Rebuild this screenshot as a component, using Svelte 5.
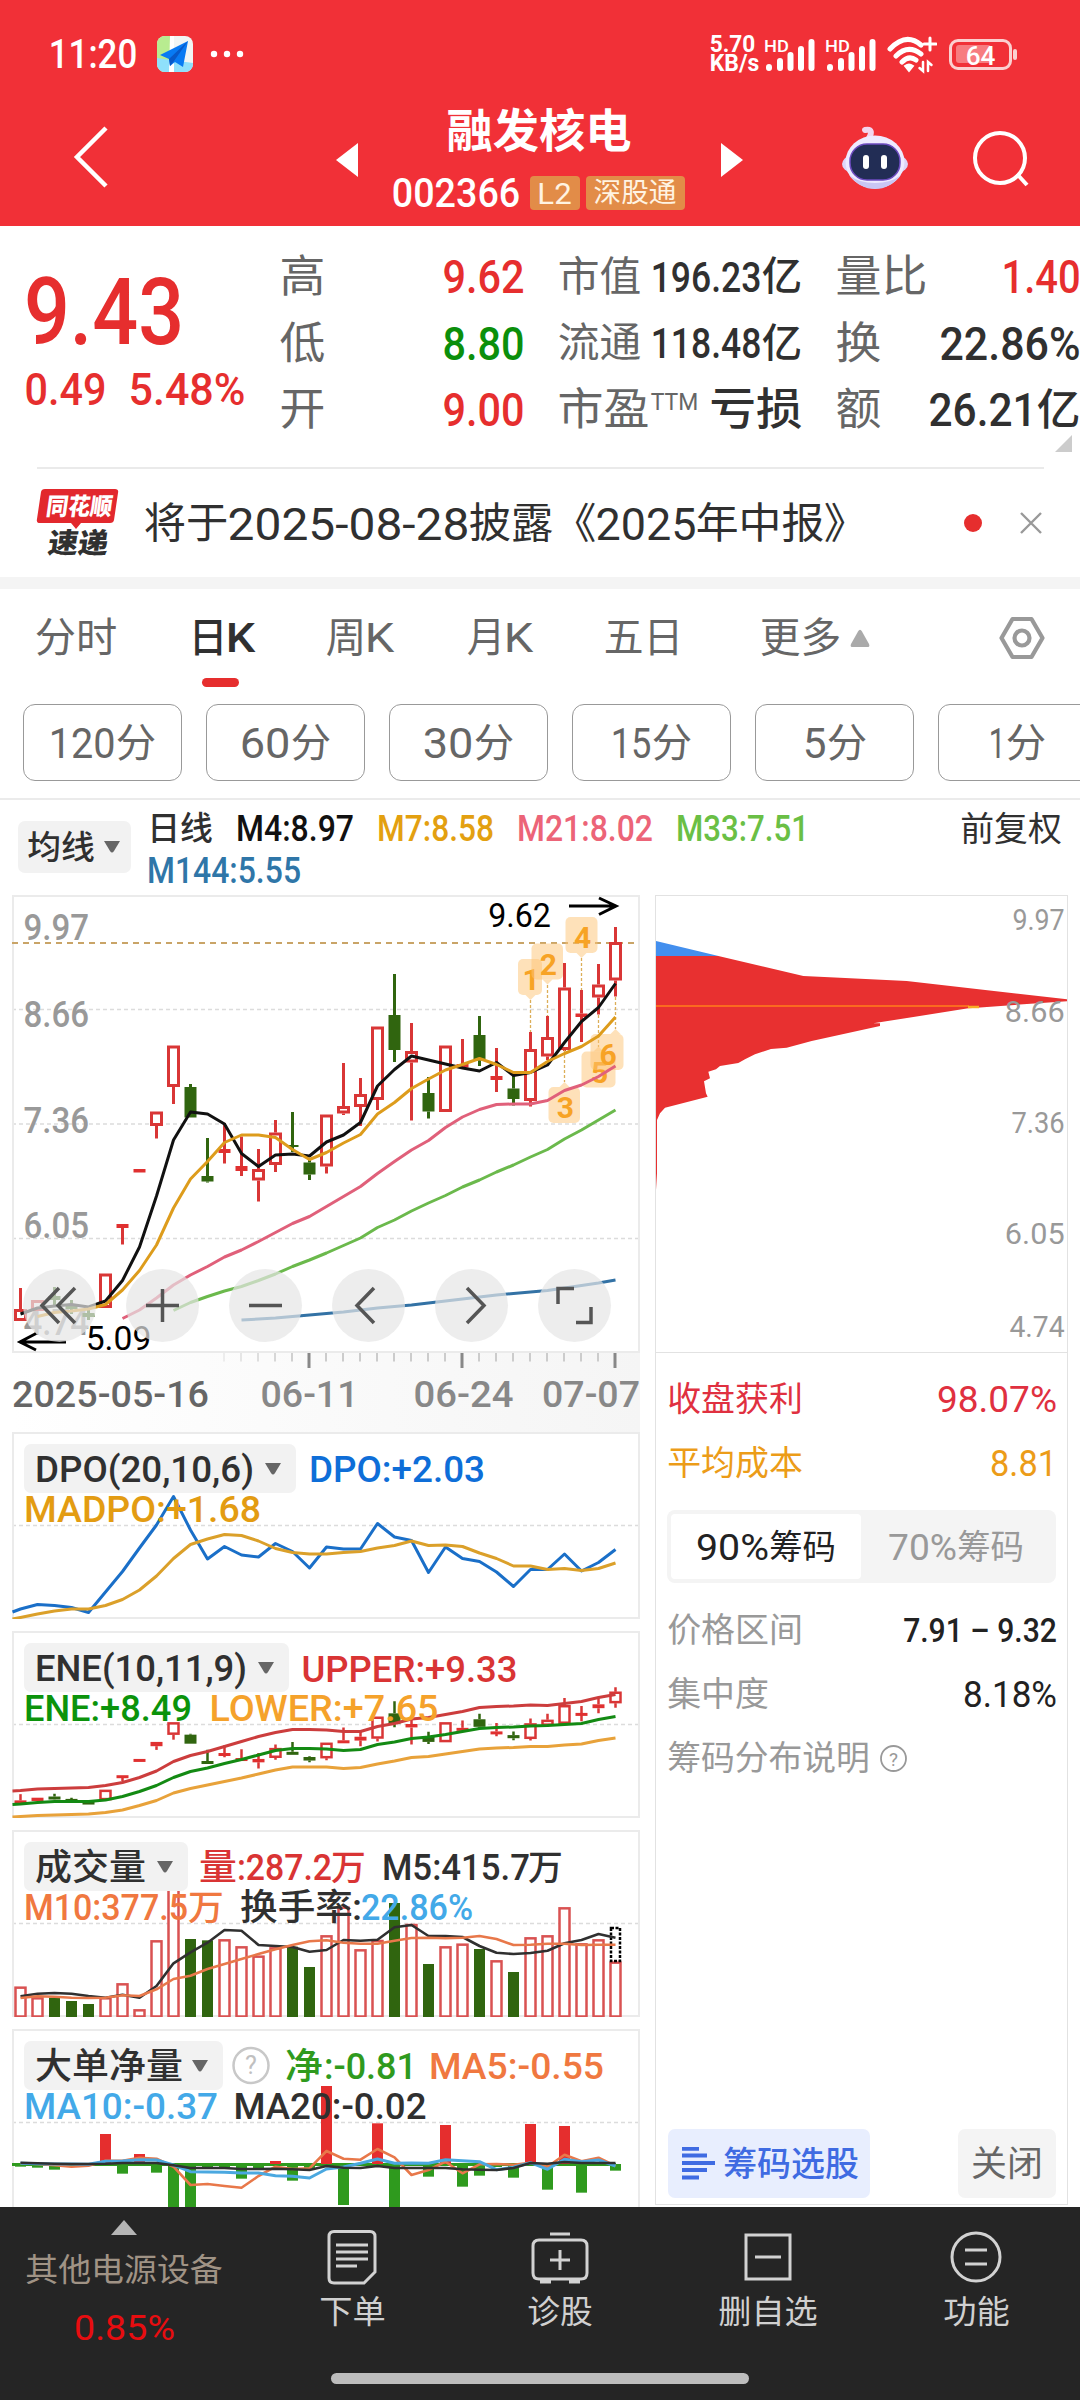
<script lang="ts">
  const step = 17;
  const cx = (i: number) => 20.5 + step * i;

  // [wick top, body top, body bottom, wick bottom, rising]
  const candles: [number, number, number, number, boolean][] = [
    [1288, 1309, 1321, 1321, true], [1300, 1300, 1311, 1311, true], [1287, 1296, 1300, 1305, false],
    [1300, 1304, 1309, 1314, false], [1308, 1313, 1317, 1320, false], [1273.5, 1273.5, 1308, 1308, true],
    [1224, 1224, 1228, 1244.5, true], [1169, 1169, 1172.5, 1172.5, true], [1111.5, 1111.5, 1126, 1138.5, true],
    [1045.5, 1045.5, 1087, 1104, true], [1084, 1087, 1117.5, 1117.5, false], [1138, 1176, 1181.5, 1182.5, false],
    [1123, 1149, 1153, 1163.5, true], [1136.5, 1166, 1171, 1176, true], [1149, 1169, 1180.5, 1201.5, true],
    [1120, 1132.5, 1165, 1172, true], [1112, 1145, 1147, 1152, false], [1160, 1162.5, 1174.5, 1180, false],
    [1114.5, 1114.5, 1166.5, 1173.5, true], [1063, 1106, 1113.5, 1115, true], [1078, 1094, 1107, 1126, true],
    [1026.5, 1026.5, 1100, 1110, true], [974, 1015, 1050, 1062, false], [1023, 1051, 1062.5, 1120.5, true],
    [1077, 1093, 1111.5, 1118.5, false], [1045.5, 1045.5, 1112, 1112, true], [1039, 1064, 1067.5, 1067.5, true],
    [1016, 1035, 1060.5, 1066, false], [1048, 1076, 1080, 1092, true], [1076, 1088.5, 1099, 1105.5, false],
    [1032, 1049, 1101, 1106.5, true], [1016, 1037, 1056.5, 1060, true], [963, 987.5, 1050, 1051, true],
    [990, 1013.5, 1017, 1042, true], [964, 984.5, 997.5, 1014.5, true], [927, 942, 980.5, 996.5, true],
  ];

  const m4 = [1314, 1308, 1306, 1304.5, 1307, 1301, 1280.5, 1247, 1196, 1140, 1112, 1114, 1124, 1153.5, 1166.5, 1155, 1154, 1156, 1142, 1135, 1122.5, 1086, 1069.5, 1056, 1060, 1064, 1068, 1071, 1062.5, 1075.5, 1072.5, 1065, 1042.5, 1021.5, 1007.5, 983.5];
  const m7 = [1316.5, 1312.5, 1311, 1309, 1304.5, 1290, 1270.5, 1245, 1208, 1179, 1161.5, 1142.5, 1135, 1135, 1137.5, 1149.5, 1159.5, 1152.5, 1143, 1134.5, 1114, 1102.5, 1088.5, 1079, 1070, 1064.5, 1058.5, 1064.5, 1072.5, 1072.5, 1061.5, 1053.5, 1046.5, 1036, 1017];
  const m21 = [1318.5, 1310, 1298, 1285, 1275, 1266.5, 1257, 1250, 1241.5, 1232.5, 1223.5, 1216.5, 1206.5, 1196.5, 1186.5, 1173.5, 1161.5, 1150, 1140.5, 1127.5, 1117, 1109.5, 1104.5, 1104, 1104, 1100.5, 1090.5, 1085, 1076.5, 1066];
  const m33 = [1310.5, 1302.5, 1296.5, 1291, 1286.5, 1280.5, 1274, 1266.5, 1260, 1253, 1245.5, 1238, 1227.5, 1220, 1211, 1203, 1195.5, 1187, 1180, 1172, 1165, 1157, 1149.5, 1139, 1130, 1120, 1110];
  const m144 = [1320, 1319, 1318, 1316.5, 1315, 1313.5, 1312, 1310, 1308, 1306.5, 1305, 1303, 1301, 1299, 1297, 1295, 1293.5, 1292, 1290.5, 1288, 1285.5, 1283, 1280];

  const dpo = [1609, 1604.5, 1605.5, 1607.5, 1612.5, 1592, 1571.5, 1548, 1525, 1496.5, 1530, 1559, 1546.5, 1555, 1557, 1543.5, 1551.5, 1568, 1547, 1549, 1549, 1523.5, 1537, 1540.5, 1572.5, 1547, 1558.5, 1561.5, 1572, 1586.5, 1569.5, 1569.5, 1554, 1571, 1562.5, 1549.5];
  const madpo = [1617.5, 1614, 1611, 1609, 1609, 1605.5, 1599.5, 1590, 1576, 1558.5, 1544.5, 1539, 1534.5, 1535.5, 1541, 1548.5, 1552.5, 1554, 1554, 1552.5, 1551.5, 1548, 1545.5, 1541, 1545.5, 1545, 1546.5, 1553, 1558.5, 1566, 1566, 1569.5, 1568.5, 1570.5, 1568.5, 1563];

  const upper = [1790.5, 1789, 1788.5, 1788, 1787.5, 1785.5, 1782.5, 1777.5, 1771, 1761.5, 1755.5, 1751.5, 1746.5, 1741.5, 1736.5, 1732.5, 1729.5, 1729.5, 1730, 1731.5, 1731.5, 1726.5, 1723.5, 1719, 1717.5, 1714.5, 1711.5, 1707.5, 1706.5, 1706, 1705, 1705.5, 1703.5, 1701.5, 1697.5, 1694.5];
  const ene = [1804, 1802.5, 1801.5, 1801.5, 1801.5, 1800, 1796.5, 1791.5, 1785.5, 1777.5, 1771.5, 1768, 1763.5, 1759.5, 1755, 1750.5, 1748.5, 1748.5, 1749, 1750.5, 1749.5, 1744.5, 1742, 1738.5, 1737, 1734.5, 1731.5, 1728.5, 1727.5, 1727, 1726, 1725.5, 1724.5, 1723.5, 1719.5, 1716.5];
  const lower = [1816.5, 1815.5, 1815, 1814.5, 1814, 1812.5, 1810, 1805.5, 1800.5, 1793, 1788.5, 1785, 1781.5, 1778, 1774, 1770, 1767, 1767, 1767, 1768.5, 1767.5, 1764, 1761, 1757.5, 1756.5, 1754, 1751.5, 1749, 1748, 1747.5, 1746.5, 1746.5, 1745, 1744, 1740.5, 1738];
  const eneY = (y: number) => 1687.3 + (y - 927) * 0.296;

  const third = (base: number, list: number[]) => list.map((v) => base + v / 3);
  const falling = [2, 3, 4, 10, 11, 16, 17, 22, 24, 27, 29];
  const volume = third(1820, [500, 532, 533, 543, 552, 532, 490, 568, 361, 198, 357, 361, 358, 379, 407, 382, 380, 441, 346, 260, 388, 360, 249, 312, 432, 379, 371, 387, 421, 456, 352, 346, 262, 370, 358, 425]);
  const vol5 = third(1820, [529, 521, 519, 521, 528, 533, 524, 533, 498, 430, 397, 368, 330, 332, 375, 378, 381, 395, 390, 360, 362, 359, 322, 315, 348, 348, 351, 378, 398, 402, 399, 392, 370, 360, 342, 353]);
  const vol10 = third(1820, [534, 529, 530, 533, 534, 533, 526, 528, 508, 477, 467, 447, 432, 417, 402, 388, 375, 364, 361, 368, 371, 371, 362, 354, 353, 355, 353, 348, 357, 375, 374, 371, 371, 375, 374, 374]);

  const net = third(2020, [440, 443, 449, 434, 434, 342, 461, 402, 458, 570, 570, 445, 443, 476, 445, 423, 482, 446, 198, 555, 436, 310, 570, 437, 470, 315, 500, 467, 441, 473, 312, 509, 318, 518, 434, 452]);
  const net5 = third(2020, [430, 432, 436, 440, 437, 422, 422, 413, 416, 440, 495, 492, 498, 503, 468, 440, 447, 445, 393, 416, 419, 387, 412, 465, 450, 425, 460, 433, 432, 434, 428, 440, 404, 424, 413, 438]);
  const net10 = third(2020, [430, 431, 432, 432, 433, 424, 423, 419, 420, 435, 455, 456, 457, 459, 459, 467, 469, 474, 447, 441, 430, 417, 430, 429, 430, 419, 422, 425, 449, 442, 428, 448, 418, 425, 420, 438]);
  const net20 = third(2020, [428, 430, 431, 432, 432, 431, 429, 429, 429, 436, 444, 444, 444, 447, 447, 446, 448, 450, 438, 443, 444, 438, 444, 444, 444, 444, 448, 449, 450, 444, 429, 431, 426, 429, 429, 429]);

  const path = (list: number[], from = 0, edge = 0) =>
    (edge ? `12.5,${edge} ` : '') + list.map((y, i) => `${cx(i + from)},${y.toFixed(1)}`).join(' ');

  const flags = [
    { n: '1', x: 518, w: 24, y: 959, px: 530.5, up: false, a: 1000, b: 1032 },
    { n: '2', x: 531.5, w: 31.5, y: 943.5, px: 547.5, up: false, a: 985, b: 1016 },
    { n: '4', x: 565.5, w: 32, y: 917, px: 581.5, up: false, a: 958, b: 990 },
    { n: '3', x: 548.5, w: 31.5, y: 1087, px: 564.5, up: true, a: 1050, b: 1082 },
    { n: '5', x: 581.5, w: 34, y: 1051.5, px: 598.5, up: true, a: 1015, b: 1047 },
    { n: '6', x: 590.5, w: 33, y: 1034, px: 615.5, up: true, a: 997, b: 1029 },
  ];

  const tabs = [
    { t: [['分时', 78]], l: 0 }, { t: [['日', 34], ['K', 25]], l: 76, on: true }, { t: [['周', 36], ['K', 25]], l: 75 },
    { t: [['月', 34], ['K', 25]], l: 77 }, { t: [['五日', 75]], l: 75 }, { t: [['更多', 77]], l: 81, more: true },
  ] as { t: [string, number][]; l: number; on?: boolean; more?: boolean }[];
  const minutes: [string, number][] = [['120', 62], ['60', 46], ['30', 46], ['15', 36], ['5', 19], ['1', 12]];
  const averages: [string, number, string][] = [
    ['M4:8.97', 114, 'black'], ['M7:8.58', 113, 'amber'], ['M21:8.02', 132, 'pink'], ['M33:7.51', 129, 'lime'],
  ];
</script>

{#snippet fit(t: string, w: number, s: number, c = '')}
  <svg class="fit {c}" width={w} height={s}><text x={-s * 0.055} y={s * 0.86} font-size={s} textLength={w + s * 0.11} lengthAdjust="spacingAndGlyphs">{t}</text></svg>
{/snippet}

{#snippet label(t: string, x: number, y: number, w: number, s: number, c: string)}
  <text class={c} x={x - s * 0.055} {y} font-size={s} textLength={w + s * 0.11} lengthAdjust="spacingAndGlyphs">{t}</text>
{/snippet}

{#snippet line(points: string, c: string)}
  <polyline class="curve {c}" {points} />
{/snippet}

{#snippet frame(y: number, h: number, grid: number[])}
  {#each grid as g}<line class="grid" x1="12" x2="639" y1={g} y2={g} />{/each}
  <rect class="frame" x="13" {y} width="626" height={h} />
{/snippet}

{#snippet caret(w = 16, h = 12)}
  <svg width={w} height={h} viewBox="0 0 16 12"><path class="f666" d="M0 0H16L10 10Q8 13 6 10Z" /></svg>
{/snippet}

{#snippet signal()}
  <div class="signal">
    {@render fit('HD', 23, 17, 'w500')}
    <svg class="bars" width="49" height="32" viewBox="0 0 49 32">
      <path d="M3 29v-1M14 29v-7M24.500 29v-13M35 29v-19M45.500 29V3" stroke="#fff" stroke-width="6" stroke-linecap="round" />
    </svg>
  </div>
{/snippet}

<main>
  <header>
    <div class="status">
      <div class="clock">
        {@render fit('11:20', 84, 40, 'w500')}
        <svg class="app" width="36" height="36" viewBox="0 0 36 36">
          <rect width="36" height="36" rx="8" fill="#f1f5f4" />
          <path d="M8 0h5v36H8a8 8 0 0 1-8-8V8a8 8 0 0 1 8-8Z" fill="#b8ec90" />
          <path d="M0 22 36 27v1a8 8 0 0 1-8 8H8a8 8 0 0 1-8-8Z" fill="#8fe0fb" />
          <path d="M13 0h4v36h-5Z" fill="#fff" />
          <path d="M31 5 3 19l9 4 1 7 5-4 8 5Z" fill="#087af3" /><path d="M31 5 12 23l1 7 4-5Z" fill="#0758c8" />
        </svg>
        <svg width="34" height="8"><g fill="#fff"><circle cx="4" cy="4" r="3.200" /><circle cx="17" cy="4" r="3.200" /><circle cx="30" cy="4" r="3.200" /></g></svg>
      </div>
      <div class="system">
        <div class="speed">{@render fit('5.70', 43, 23, 'w700')}{@render fit('KB/s', 47, 23, 'w700')}</div>
        {@render signal()}
        {@render signal()}
        <svg class="wifi" width="50" height="38" viewBox="0 0 50 38" fill="none" stroke="#fff" stroke-linecap="round">
          <path d="M3 13Q19-4 34 9M9 20Q21 8 34 18M15 26Q22 19 29 24" stroke-width="5" />
          <path d="M18 30q4-3 8 0l-4 5Z" fill="#fff" stroke-width="2" />
          <path d="M43 2V14M37 8H49" stroke-width="3" /><path d="M36 26V35L32.500 32M41 35V26L44.500 29" stroke-width="2.500" />
        </svg>
        <div class="battery"><div class="level"></div><span>{@render fit('64', 27, 25, 'w500')}</span></div>
        <i class="nub"></i>
      </div>
    </div>
    <div class="titlebar">
      <svg width="36" height="62" viewBox="0 0 36 62"><path d="M33 2 4 31 33 60" fill="none" stroke="#fff" stroke-width="4.500" /></svg>
      <svg class="prev" width="22" height="34"><path d="M22 0V34L0 17Z" fill="#fff" /></svg>
      <div class="name">
        {@render fit('融发核电', 180, 46, 'w700')}
        <div class="code">
          {@render fit('002366', 124, 40, 'w500')}
          <b>{@render fit('L2', 31, 30, 'cream')}</b>
          <b class="wide">{@render fit('深股通', 80, 27, 'cream')}</b>
        </div>
      </div>
      <svg class="next" width="22" height="34"><path d="M0 0V34L22 17Z" fill="#fff" /></svg>
      <svg class="robot" width="68" height="64" viewBox="0 0 68 64">
        <path d="M27 14Q34 2 24 4" fill="none" stroke="#f3d5ee" stroke-width="6" stroke-linecap="round" />
        <ellipse cx="34" cy="38" rx="33" ry="14" fill="#ddd5f8" /><ellipse cx="34" cy="36" rx="29.500" ry="26.500" fill="#eeeaff" />
        <path d="M8 49q11 14 26 14t26-14q-10 8-26 8T8 49Z" fill="#c9c6f4" />
        <rect x="9" y="18" width="50" height="36" rx="17" fill="#222d55" stroke="#6d4bc0" stroke-width="1.500" />
        <rect x="22" y="29" width="6" height="14" rx="3" fill="#fff" /><rect x="40" y="29" width="6" height="14" rx="3" fill="#fff" />
      </svg>
      <svg class="search" width="58" height="58" viewBox="0 0 58 58" fill="none" stroke="#fff" stroke-width="4"><circle cx="28" cy="28" r="25" /><path d="M45 44 55 55" /></svg>
    </div>
  </header>

  <section class="quote">
    <div class="last">
      {@render fit('9.43', 150, 92, 'red w500')}
      <div>{@render fit('0.49', 77, 45, 'red w500')}{@render fit('5.48%', 112, 45, 'red w500')}</div>
    </div>
    <div class="cols">
      <p>{@render fit('高', 41, 44, 'grey')}<span>{@render fit('9.62', 77, 46, 'red w500')}</span></p>
      <p>{@render fit('低', 41, 44, 'grey')}<span>{@render fit('8.80', 77, 46, 'green w500')}</span></p>
      <p>{@render fit('开', 41, 44, 'grey')}<span>{@render fit('9.00', 77, 46, 'red w500')}</span></p>
    </div>
    <div class="cols">
      <p>{@render fit('市值', 79, 41, 'grey')}<span>{@render fit('196.23', 106, 43, 'dark w500')}{@render fit('亿', 36, 40, 'dark w500')}</span></p>
      <p>{@render fit('流通', 79, 41, 'grey')}<span>{@render fit('118.48', 106, 43, 'dark w500')}{@render fit('亿', 36, 40, 'dark w500')}</span></p>
      <p><span class="ttm">{@render fit('市盈', 87, 44, 'grey')}<sup>{@render fit('TTM', 45, 24, 'grey')}</sup></span>{@render fit('亏损', 88, 44, 'dark w500')}</p>
    </div>
    <div class="cols">
      <p>{@render fit('量比', 87, 44, 'grey')}<span>{@render fit('1.40', 74, 46, 'red w500')}</span></p>
      <p>{@render fit('换', 41, 44, 'grey')}<span>{@render fit('22.86%', 136, 46, 'dark w500')}</span></p>
      <p>{@render fit('额', 41, 44, 'grey')}<span>{@render fit('26.21', 103, 46, 'dark w500')}{@render fit('亿', 39, 43, 'dark w500')}</span></p>
    </div>
    <svg class="corner" width="17" height="17"><path d="M17 0V17H0Z" fill="#ccc" /></svg>
  </section>

  <section class="news">
    <div class="brand">
      <svg width="82" height="68" viewBox="0 0 82 68">
        <path d="M8 0H78q4 0 3 4L77 31q-.500 3-4 3H44l-5 6-5-6H3q-4 0-3-4L4 3q.500-3 4-3Z" fill="#e2282d" />
        <g transform="translate(2 0) skewX(-8)">
          <text class="brandtext fwhite" x="10" y="26" font-size="24" textLength="66" lengthAdjust="spacingAndGlyphs">同花顺</text>
          <text class="brandtext fdark" x="17" y="64" font-size="28" textLength="60" lengthAdjust="spacingAndGlyphs">速递</text>
        </g>
      </svg>
    </div>
    {@render fit('将于', 80, 42, 'dark')}{@render fit('2025-08-28', 237, 45, 'dark')}{@render fit('披露', 80, 42, 'dark')}{@render fit('《', 39, 42, 'dark')}{@render fit('2025', 96, 45, 'dark')}{@render fit('年中报', 124, 42, 'dark')}{@render fit('》', 39, 42, 'dark')}
    <i class="dot"></i>
    <svg class="close" width="24" height="24"><path d="M2 2 22 22M22 2 2 22" stroke="#999" stroke-width="2.400" /></svg>
  </section>

  <nav class="tabs">
    {#each tabs as tab}
      <div class="tab" class:on={tab.on} style:margin-left="{tab.l}px">
        {#each tab.t as [t, w]}{@render fit(t, w, 41, tab.on ? 'dark w500' : 'grey')}{/each}
        {#if tab.more}<svg width="20" height="18"><path d="M8 2.500Q10-1 12 2.500L19 15Q20 18 18 18H2Q0 18 1 15Z" fill="#aaa" /></svg>{/if}
      </div>
    {/each}
    <svg class="gear" width="46" height="44" viewBox="0 0 46 44" fill="none" stroke="#999" stroke-width="4.200" stroke-linejoin="round"><path d="M13.500 3H32.500L43.500 22 32.500 41H13.500L2.500 22Z" /><circle cx="23" cy="22" r="7.500" /></svg>
  </nav>
  <nav class="minutes">
    {#each minutes as [n, w]}<div>{@render fit(n, w, 43, 'grey')}{@render fit('分', 36, 40, 'grey')}</div>{/each}
  </nav>

  <section class="averages">
    <button class="drop">{@render fit('均线', 64, 33, 'dark w500')}{@render caret(16, 12)}</button>
    <div class="avg">
      {@render fit('日线', 62, 33, 'dark w500')}
      {#each averages as [t, w, c]}{@render fit(t, w, 36, c + ' w500')}{/each}
      {@render fit('M144:5.55', 150, 37, 'blue w500')}
    </div>
    <div class="adjust">{@render fit('前复权', 98, 34, 'dark')}</div>
  </section>

  <section class="body">
    <div class="left">
      <div class="panel">
        <svg width="640" height="458" viewBox="0 895 640 458">
          {@render frame(896, 456, [1009.5, 1124, 1238.5])}
          <line x1="12" x2="639" y1="943" y2="943" stroke="#c9a467" stroke-width="2" stroke-dasharray="6 5" />
          {#each [['9.97', 940], ['8.66', 1027], ['7.36', 1133], ['6.05', 1238], ['4.74', 1335]] as [t, y]}
            {@render label(String(t), 25.5, Number(y), 61.5, 37, 'f999 w500')}
          {/each}
          {#each candles as [wt, bt, bb, wb, up], i}
            <g class={up ? 'up' : 'down'}>
              <path d="M{cx(i)} {wt}V{bt}M{cx(i)} {bb}V{wb}" />
              {#if up && bb - bt > 6}<rect class="hollow" x={cx(i) - 5} y={bt + 1.5} width="10" height={bb - bt - 3} />
              {:else}<rect class="solid" x={cx(i) - 6} y={bt} width="12" height={bb - bt} />{/if}
            </g>
          {/each}
          {#each flags as f}
            <path d="M{f.px} {f.a}V{f.b}" stroke="#dcae58" stroke-width="1.300" stroke-dasharray="3 2" />
            <rect x={f.x} y={f.y} width={f.w} height="36" rx="5" fill="#fdc373" opacity=".5" />
            <path d={f.up ? `M${f.px - 5} ${f.y}l5-5 5 5Z` : `M${f.px - 5} ${f.y + 36}l5 5 5-5Z`} fill="#fdc373" opacity=".5" />
            <text class="flag" x={f.x + f.w / 2 + 1} y={f.y + 31}>{f.n}</text>
          {/each}
          {@render line(path(m144, 13), 'sblue')}
          {@render line(path(m33, 9), 'slime')}
          {@render line(path(m21, 6), 'spink')}
          {@render line(path(m4), 'sblack')}
          {@render line(path(m7, 1), 'samber')}
          <g fill="none" stroke="#000" stroke-width="3"><path d="M569 906H616M599 898 616 906 599 914.500M66 1342H20M36 1333.500 20 1342 36 1350" /></g>
          {@render label('9.62', 490, 927, 59, 33, 'f000')}
          {@render label('5.09', 87.5, 1350, 62, 33, 'f000')}
        </svg>
        <div class="tools">
          <i><svg viewBox="0 0 73 73"><path d="M36 19 19 36.500 36 54M52 19 35 36.500 52 54" /></svg></i>
          <i><svg viewBox="0 0 73 73"><path d="M36.500 20V53M20 36.500H53" /></svg></i>
          <i><svg viewBox="0 0 73 73"><path d="M20 36.500H53" /></svg></i>
          <i><svg viewBox="0 0 73 73"><path d="M42 19 25 36.500 42 54" /></svg></i>
          <i><svg viewBox="0 0 73 73"><path d="M32 19 49 36.500 32 54" /></svg></i>
          <i><svg viewBox="0 0 73 73"><path d="M20 35V19.500H36M53 38V53.500H38" /></svg></i>
        </div>
      </div>
      <svg class="axis" width="640" height="79" viewBox="0 1353 640 79">
        <defs>
          <linearGradient id="fade"><stop offset="0" stop-color="#f5f5f5" stop-opacity="0" /><stop offset="1" stop-color="#f5f5f5" /></linearGradient>
        </defs>
        <rect x="12" y="1353" width="628" height="79" fill="url(#fade)" />
        {#each Array(24) as _, k}
          {@const i = k + 12}
          {@const major = i % 9 === 8}
          <line x1={cx(i) - 0.5} x2={cx(i) - 0.5} y1="1353" y2={major ? 1368 : 1361.5} stroke={major ? '#888' : '#ccc'} stroke-width={major ? 3 : 2} opacity={Math.min(1, 0.3 + k * 0.15)} />
        {/each}
        {@render label('2025-05-16', 14, 1407, 193, 36, 'f666 w500')}
        {@render label('06-11', 262.5, 1407, 94, 36, 'f888 w500')}
        {@render label('06-24', 415.5, 1407, 96, 36, 'f888 w500')}
        {@render label('07-07', 544, 1407, 94, 36, 'f888 w500')}
      </svg>

      <div class="panel gap">
        <svg width="640" height="187" viewBox="0 1432 640 187">
          {@render frame(1433, 185, [1525.5])}
          {@render line(path(dpo, 0, 1612), 'sdpo')}
          {@render line(path(madpo, 0, 1619), 'smadpo')}
          {@render label('DPO:+2.03', 311, 1482, 172, 37, 'fdpo w500')}
          {@render label('MADPO:+1.68', 26, 1521.5, 233, 37, 'fmadpo w500')}
        </svg>
        <button class="drop pick">{@render fit('DPO(20,10,6)', 215, 37, 'dark w500')}{@render caret()}</button>
      </div>

      <div class="panel gap">
        <svg width="640" height="187" viewBox="0 1631 640 187">
          {@render frame(1632, 185, [1724.5])}
          {#each candles as [wt, bt, bb, wb, up], i}
            {@const h = Math.max(3, eneY(bb) - eneY(bt))}
            <g class="{up ? 'up' : 'down'} thin">
              <path d="M{cx(i)} {eneY(wt)}V{eneY(bt)}M{cx(i)} {eneY(bb)}V{eneY(wb)}" />
              {#if up && h > 4.5}<rect class="hollow" x={cx(i) - 5} y={eneY(bt) + 1} width="10" height={h - 2} />
              {:else}<rect class="solid" x={cx(i) - 6} y={eneY(bt)} width="12" height={h} />{/if}
            </g>
          {/each}
          {@render line(path(upper, 0, 1791), 'supper')}
          {@render line(path(ene, 0, 1804.5), 'sene')}
          {@render line(path(lower, 0, 1817), 'slower')}
          {@render label('UPPER:+9.33', 303.5, 1681.5, 212, 37, 'fup w500')}
          {@render label('ENE:+8.49', 26, 1720.5, 164, 37, 'fene w500')}
          {@render label('LOWER:+7.65', 211.5, 1720.5, 225, 37, 'flower w500')}
        </svg>
        <button class="drop pick">{@render fit('ENE(10,11,9)', 208, 37, 'dark w500')}{@render caret()}</button>
      </div>

      <div class="panel gap">
        <svg width="640" height="187" viewBox="0 1830 640 187">
          {@render frame(1831, 185, [1923.5])}
          {#each volume as y, i}
            {#if falling.includes(i)}<rect fill="#30650f" x={cx(i) - 5.5} {y} width="11" height={2017 - y} />
            {:else}<rect class="volbar" x={cx(i) - 5} y={y + 1} width="10" height={2015.5 - y} />{/if}
          {/each}
          <rect x="611" y="1928" width="9" height="33" fill="#fff" stroke="#000" stroke-width="2.500" stroke-dasharray="3 1.500" />
          {@render label('量', 201, 1880, 34, 36, 'fup w500')}{@render label(':287.2', 239, 1880, 91, 37, 'fup w500')}{@render label('万', 333, 1880, 31, 35, 'fup w500')}
          {@render label('M5:415.7', 384, 1880, 144, 37, 'fdark w500')}{@render label('万', 530, 1880, 31, 35, 'fdark w500')}
          {@render label('M10:377.5', 26, 1919.5, 160, 37, 'forange w500')}{@render label('万', 190, 1919.5, 32, 35, 'forange w500')}
          {@render label('换手率', 242, 1919.5, 109, 36, 'fdark w500')}{@render label(':', 354, 1919.5, 6, 37, 'fdark w500')}
          {@render label('22.86%', 363, 1919.5, 108, 37, 'fsky w500')}
          {@render line(path(vol5), 'sdark')}
          {@render line(path(vol10), 'sorange')}
        </svg>
        <button class="drop pick">{@render fit('成交量', 107, 36, 'dark w500')}{@render caret()}</button>
      </div>

      <div class="panel gap">
        <svg width="640" height="178" viewBox="0 2029 640 178">
          {@render frame(2030, 200, [2122.5])}
          <line x1="12" x2="616" y1="2164.500" y2="2164.500" stroke="#2f9a1e" stroke-width="3" />
          {#each net as y, i}
            <rect fill={y < 2164 ? '#e52e2e' : '#2f9a1e'} x={cx(i) - 5.5} y={Math.min(y, 2164)} width="11" height={Math.abs(y - 2164)} />
          {/each}
          {@render line(path(net5), 'sorange')}
          {@render line(path(net10), 'ssky')}
          {@render line(path(net20), 'sdark')}
          <circle cx="251" cy="2065.500" r="17.500" fill="#fff" stroke="#c8c8c8" stroke-width="2.500" />
          <text class="ask" x="251" y="2074">?</text>
          {@render label('净', 287, 2079, 34, 36, 'fnet w500')}{@render label(':-0.81', 326, 2079, 89, 37, 'fnet w500')}
          {@render label('MA5:-0.55', 431, 2079, 171, 37, 'forange w500')}
          {@render label('MA10:-0.37', 26, 2118.5, 190, 37, 'fsky w500')}
          {@render label('MA20:-0.02', 235.5, 2118.5, 189, 37, 'fdark w500')}
        </svg>
        <button class="drop pick">{@render fit('大单净量', 144, 36, 'dark w500')}{@render caret()}</button>
      </div>
    </div>

    <aside>
      <svg class="chips" width="412" height="457" viewBox="655 895 412 457">
        <path fill="#e83030" transform="translate(640 880) scale(.33333)" d="M48 228H235L490 288 600 293 800 303 1281 358V364L1150 373 1010 383 985 385 700 430H720V438L515 483 440 503 393 507 345 523 315 538 295 549 240 558 228 568 205 575 210 595 192 604 198 640 203 650 75 683 60 700 51 720V880L48 930Z" />
        <path d="M656 941 718.500 956H656Z" fill="#438fee" />
        <path d="M656 1006H969" stroke="#fb6a1f" stroke-width="2" /><path d="M968 1007H979" stroke="#f8ad25" stroke-width="2.500" />
        {@render label('9.97', 1014, 930, 49, 29.5, 'f999')}
        {@render label('8.66', 1006.5, 1022, 56.5, 29.5, 'f999')}
        {@render label('7.36', 1013, 1133, 50, 29.5, 'f999')}
        {@render label('6.05', 1006.5, 1244, 56.5, 29.5, 'f999')}
        {@render label('4.74', 1011, 1337, 52, 29.5, 'f999')}
      </svg>
      <div class="info">
        <p>{@render fit('收盘获利', 132, 34, 'crimson')}{@render fit('98.07%', 116, 36, 'crimson')}</p>
        <p>{@render fit('平均成本', 132, 34, 'gold')}{@render fit('8.81', 63, 36, 'gold')}</p>
        <div class="toggle">
          <span class="sel">{@render fit('90%', 69, 36, 'ink')}{@render fit('筹码', 63, 34, 'ink')}</span>
          <span>{@render fit('70%', 65, 36, 'soft')}{@render fit('筹码', 63, 34, 'soft')}</span>
        </div>
        <p>{@render fit('价格区间', 132, 34, 'soft')}{@render fit('7.91 – 9.32', 150, 34, 'ink w500')}</p>
        <p>{@render fit('集中度', 98, 34, 'soft')}{@render fit('8.18%', 90, 36, 'ink')}</p>
        <p class="explain">{@render fit('筹码分布说明', 199, 34, 'soft')}<svg width="27" height="27"><circle cx="13.500" cy="13.500" r="12.500" fill="none" stroke="#999" stroke-width="1.800" /><text class="askmark" x="13.500" y="20.500">?</text></svg></p>
      </div>
      <div class="actions">
        <button class="pickstock">
          <svg width="33" height="33"><path d="M0 1.800H17M0 8.600H25M0 16H33M0 23H25M0 30.500H17" stroke="#3f6be2" stroke-width="4" /></svg>
          {@render fit('筹码选股', 132, 34, 'royal w500')}
        </button>
        <button class="shut">{@render fit('关闭', 68, 35, 'grey')}</button>
      </div>
    </aside>
  </section>

  <footer>
    <div class="items">
      <div class="sector">
        <svg width="26" height="15"><path d="M13 0 26 15H0Z" fill="#b5b5b5" /></svg>
        {@render fit('其他电源设备', 194, 32, 'taupe')}
        {@render fit('0.85%', 97, 35, 'deepred')}
      </div>
      <div class="item">
        <svg width="50" height="56" viewBox="0 0 50 56"><path d="M7 2.500H43Q48 2.500 48 7.500V43L37 54H7Q2 54 2 49V7.500Q2 2.500 7 2.500ZM9 16H41M9 23H41M9 30H41M9 37H30" /></svg>
        {@render fit('下单', 63, 32, 'silver')}
      </div>
      <div class="item">
        <svg width="58" height="56" viewBox="0 0 58 56"><path d="M19 5H39M8 11H50Q56 11 56 17V44Q56 50 50 50H8Q2 50 2 44V17Q2 11 8 11ZM9 53H20M38 53H49M29 21V41M19 31H39" /></svg>
        {@render fit('诊股', 62, 32, 'silver')}
      </div>
      <div class="item">
        <svg width="50" height="56" viewBox="0 0 50 56"><path d="M3 6H47V50H3ZM12 28H38" /></svg>
        {@render fit('删自选', 96, 32, 'silver')}
      </div>
      <div class="item">
        <svg width="54" height="56" viewBox="0 0 54 56"><circle cx="27" cy="28" r="24" /><path d="M16 21H38M16 35H38" /></svg>
        {@render fit('功能', 63, 32, 'silver')}
      </div>
    </div>
    <div class="home"></div>
  </footer>
</main>

<style>
  :global(body) { margin: 0; background: #fff; }
  main { width: 1080px; height: 2400px; overflow: hidden; display: flex; flex-direction: column; background: #fff; font-family: Roboto, 'Noto Sans CJK SC', sans-serif; }
  svg { display: block; flex: none; }
  text { font-family: Roboto, 'Noto Sans CJK SC', sans-serif; }
  p { margin: 0; }
  button { border: 0; padding: 0; font: inherit; }
  .fit { overflow: visible; fill: #fff; }
  .w500 { font-weight: 500; }
  .w700 { font-weight: 700; }
  .cream { fill: #fff3e2; }
  .red { fill: #e62e2e; }
  .green { fill: #0b8f0b; }
  .dark { fill: #303030; }
  .grey { fill: #666; }
  .black { fill: #111; }
  .amber { fill: #e3a010; }
  .pink { fill: #ec6478; }
  .lime { fill: #6abf45; }
  .blue { fill: #2f76a8; }
  .crimson { fill: #e03040; }
  .gold { fill: #ec9c18; }
  .ink { fill: #222; }
  .soft { fill: #999; }
  .royal { fill: #3f6be2; }
  .silver { fill: #d0d0d0; }
  .taupe { fill: #a09385; }
  .deepred { fill: #e80d10; }
  .f000 { fill: #000; }
  .f666 { fill: #666; }
  .f888 { fill: #888; }
  .f999 { fill: #999; }
  .fwhite { fill: #fff; }
  .fdark { fill: #303030; }
  .fdpo { fill: #0e6ed8; }
  .fmadpo { fill: #e39c12; }
  .fup { fill: #d93434; }
  .fene { fill: #0b930b; }
  .flower { fill: #f5a22b; }
  .forange { fill: #f07840; }
  .fsky { fill: #43a9e8; }
  .fnet { fill: #2f9a1e; }

  header { height: 226px; background: #f13037; }
  .status { height: 72px; box-sizing: border-box; padding: 35px 64px 0 51px; display: flex; justify-content: space-between; }
  .clock { display: flex; align-items: center; height: 38px; }
  .app { margin: 0 17px 0 22px; }
  .system { display: flex; align-items: center; height: 38px; }
  .speed { display: grid; align-content: center; width: 47px; height: 38px; line-height: 0; margin-right: 7px; margin-top: -2px; }
  .speed .fit + .fit { margin-top: -4px; }
  .signal { position: relative; width: 49px; height: 38px; margin-right: 12px; padding-top: 2px; box-sizing: border-box; }
  .bars { position: absolute; left: 1px; top: 4px; }
  .wifi { margin: 1px 12px 0 0; }
  .battery { position: relative; box-sizing: border-box; width: 63px; height: 31px; border: 3px solid #fbd0d0; border-radius: 9px; }
  .level { box-sizing: border-box; width: 35px; height: 18px; margin: 3.500px 4px; border-radius: 3px; background: #f77c80; }
  .battery span { position: absolute; left: 15px; top: 1px; }
  .nub { width: 4px; height: 11px; margin-left: 1px; margin-right: -1px; border-radius: 2px; background: #fbd0d0; }

  .titlebar { display: flex; align-items: flex-start; height: 154px; padding-left: 73px; }
  .titlebar > svg:first-child { margin-top: 54px; }
  .prev { margin: 71px 36px 0 227px; }
  .name { display: flex; flex-direction: column; align-items: center; padding-top: 35px; width: 290px; }
  .code { display: flex; align-items: center; margin-top: 20px; height: 39px; }
  .code b { display: flex; align-items: center; justify-content: center; width: 50px; height: 34px; margin: 0 0 0 12px; border-radius: 4px; background: #e28c48; font-weight: 400; }
  .code b.wide { width: 99px; margin-left: 6px; }
  .next { margin: 71px 0 0 37px; }
  .robot { margin: 54px 0 0 98px; }
  .search { margin: 58px 0 0 63px; }

  .quote { position: relative; display: flex; height: 241px; box-sizing: border-box; padding: 17px 2px 0 27px; }
  .last { width: 255px; padding-top: 22px; padding-left: 2px; box-sizing: border-box; }
  .last > div { display: flex; gap: 27px; margin-top: 9px; margin-left: -2px; }
  .cols { width: 240px; margin-right: 38px; }
  .cols:nth-of-type(4) { margin-right: 0; width: 240px; }
  .cols p { display: flex; align-items: center; justify-content: space-between; height: 66.500px; }
  .cols p span { display: flex; align-items: center; gap: 5px; }
  .cols sup { display: flex; align-self: flex-start; margin-top: 2px; }
  .corner { position: absolute; right: 8px; bottom: 15px; }

  .news { position: relative; display: flex; align-items: center; height: 110px; margin: 0 36px 0 37px; border-top: 2px solid #eaeaea; box-sizing: border-box; }
  .brand { width: 109px; }
  .brand svg { overflow: visible; }
  .brandtext { font-weight: 900; }
  .news .fit { margin-right: 4px; }
  .dot { width: 18px; height: 18px; border-radius: 9px; background: #e62e2e; margin-left: auto; }
  .close { margin: 0 1px 0 37px; }

  .tabs { display: flex; align-items: center; height: 97px; padding: 0 35px 0 37px; border-top: 12px solid #f4f4f4; }
  .tab { position: relative; display: flex; align-items: center; gap: 3px; }
  .tab > svg:last-child:not(.fit) { margin-left: 8px; }
  .tab.on::after { content: ''; position: absolute; left: 11px; top: 61px; width: 37px; height: 9px; border-radius: 4.500px; background: #e62e2e; }
  .gear { margin-left: auto; }
  .minutes { display: flex; gap: 24px; padding: 18px 0 17px 23px; height: 77px; overflow: hidden; border-bottom: 2px solid #ebebeb; }
  .minutes div { flex: none; box-sizing: border-box; width: 159px; height: 77px; border: 1.500px solid #999; border-radius: 12px; display: flex; align-items: center; justify-content: center; gap: 5px; }

  .averages { display: flex; height: 95px; padding: 0 20px 0 18px; }
  .drop { display: flex; align-items: center; justify-content: space-between; background: #f2f2f2; border-radius: 7px; }
  .averages .drop { width: 113px; height: 52px; margin-top: 21px; padding: 0 11px; box-sizing: border-box; }
  .avg { display: flex; flex-wrap: wrap; align-items: center; align-content: flex-start; width: 700px; margin: 10px 0 0 18px; column-gap: 27px; row-gap: 5px; }
  .adjust { margin: 12px 0 0 auto; }

  .body { display: flex; height: 1312px; overflow: hidden; }
  .left { width: 640px; flex: none; }
  .panel { position: relative; }
  .panel.gap + .panel.gap { margin-top: 12px; }
  .pick { position: absolute; left: 24px; top: 12px; height: 49px; padding: 0 15px 0 13px; gap: 13px; }
  .panel:last-child .pick { gap: 11px; }
  .frame { fill: none; stroke: #ebebeb; stroke-width: 2; }
  .grid { stroke: #dcdcdc; stroke-width: 1.300; stroke-dasharray: 4 3; }
  .curve { fill: none; stroke-width: 3; stroke-linejoin: round; }
  .up { stroke: #d93636; fill: none; }
  .down { stroke: #30650f; fill: none; }
  .up path, .down path { stroke-width: 3; }
  .thin path { stroke-width: 2.500; }
  .hollow { fill: #fff; stroke-width: 3; }
  .thin .hollow { stroke-width: 2.500; }
  .up .solid { fill: #e03030; stroke: none; }
  .down .solid { fill: #30650f; stroke: none; }
  .volbar { fill: #fff; stroke: #d95252; stroke-width: 2.500; }
  .flag { font-weight: 700; font-size: 30px; text-anchor: middle; fill: #f7a325; }
  .ask { font-size: 25px; text-anchor: middle; fill: #c0c0c0; }
  .askmark { font-size: 19px; text-anchor: middle; fill: #999; }
  .sblack { stroke: #111; }
  .samber { stroke: #dd9c1c; }
  .spink { stroke: #e0607a; }
  .slime { stroke: #6bb94c; }
  .sblue { stroke: #3372a5; }
  .sdpo { stroke: #1a6fc8; }
  .smadpo { stroke: #dba02a; }
  .supper { stroke: #cc3d3d; }
  .sene { stroke: #138a13; }
  .slower { stroke: #e8a23a; }
  .sdark { stroke: #303030; stroke-width: 2.600; }
  .sorange { stroke: #e8784a; stroke-width: 2.600; }
  .ssky { stroke: #4aa8e0; }
  .tools { position: absolute; left: 23px; top: 374px; display: flex; gap: 30px; }
  .tools i { width: 73px; height: 73px; border-radius: 50%; background: rgba(229, 229, 229, 0.7); }
  .tools svg { fill: none; stroke: #555; stroke-width: 3.500; }

  aside { position: relative; box-sizing: border-box; width: 413px; height: 1310px; margin-left: 15px; border: 1.500px solid #e2e2e2; display: flex; flex-direction: column; }
  .chips { margin: -1px 0 0 -1px; border-bottom: 1.500px solid #e2e2e2; }
  .info { padding: 14px 12px 0 13px; }
  .info p { display: flex; justify-content: space-between; align-items: center; height: 64px; }
  .toggle { display: flex; box-sizing: border-box; width: 389px; height: 73px; margin: 15px 0 15px -2px; padding: 4px; border-radius: 8px; background: #f4f4f4; }
  .toggle span { display: flex; align-items: center; justify-content: center; gap: 4px; width: 190px; border-radius: 4px; }
  .toggle .sel { background: #fff; }
  .info .explain { justify-content: flex-start; gap: 12px; }
  .actions { display: flex; justify-content: space-between; margin: auto 11px 6px 12px; }
  .actions button { display: flex; align-items: center; justify-content: center; height: 69px; border-radius: 7px; }
  .pickstock { width: 202px; gap: 10px; background: #e8eefe; }
  .shut { width: 98px; background: #f4f4f4; }

  footer { height: 193px; background: #252525; }
  .items { display: flex; height: 166px; }
  .sector { display: flex; flex-direction: column; align-items: center; width: 248px; padding-top: 13px; }
  .sector .fit { margin-top: 18px; }
  .sector .fit + .fit { margin-top: 25px; }
  .item { display: flex; flex-direction: column; align-items: center; width: 208px; padding-top: 22px; }
  .item > svg:not(.fit) { fill: none; stroke: #d2d2d2; stroke-width: 3; }
  .item .fit { margin-top: 10px; }
  .home { width: 418px; height: 11px; margin: 0 auto; border-radius: 6px; background: #bdbdbd; }
</style>
